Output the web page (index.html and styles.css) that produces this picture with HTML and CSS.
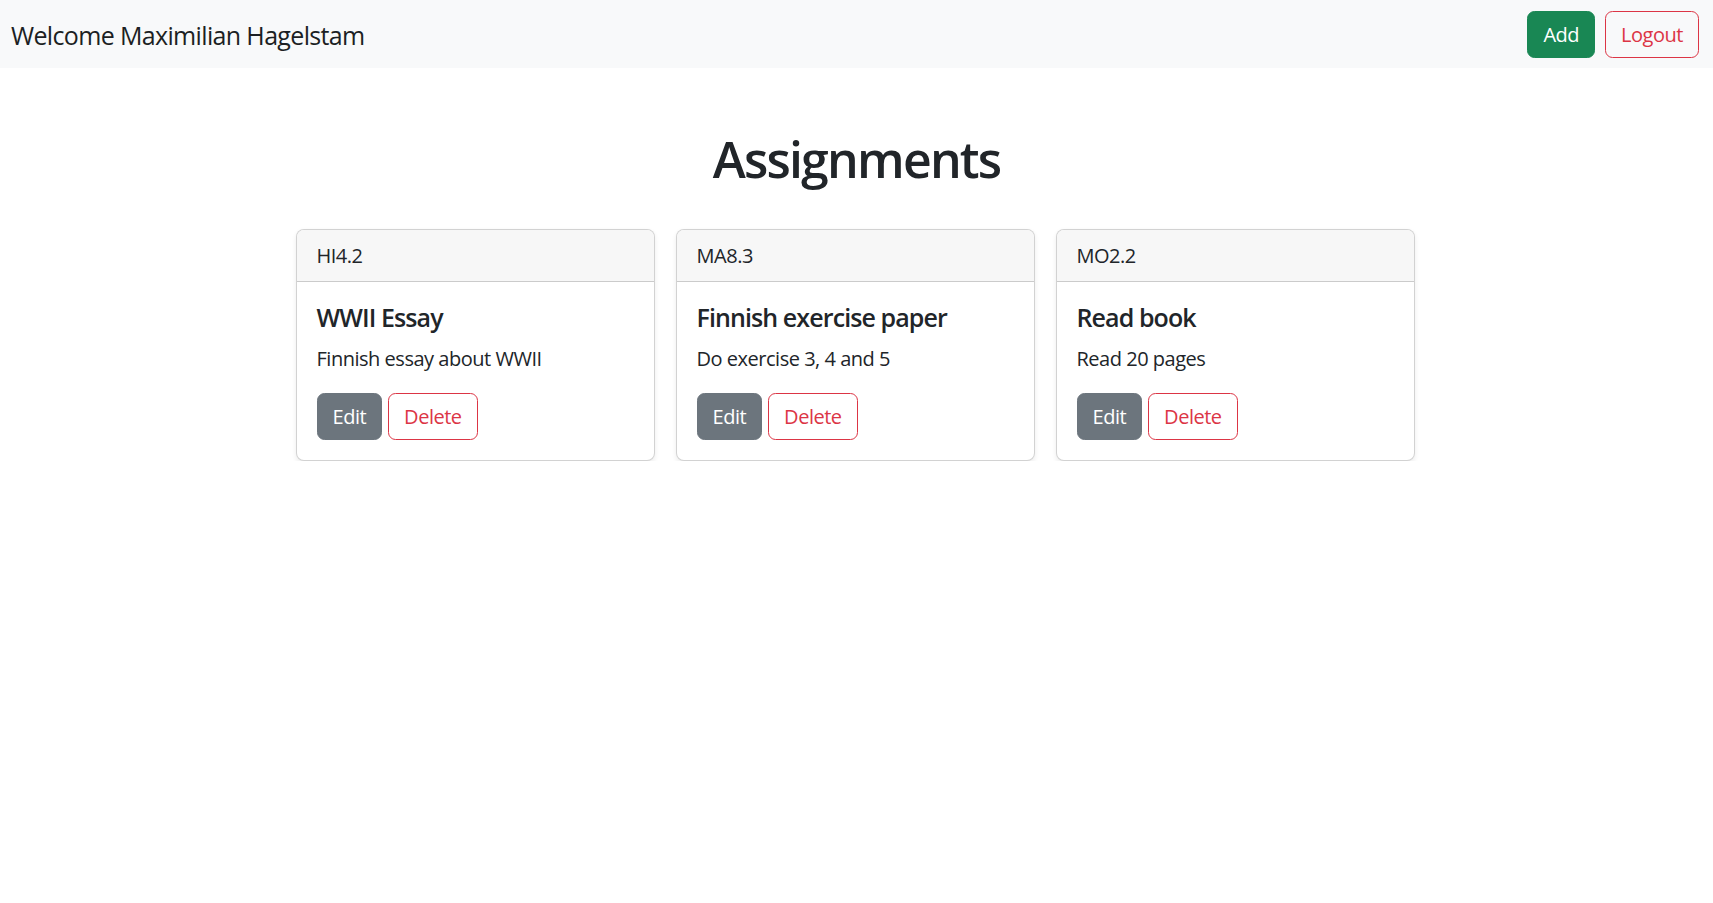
FILE: index.html
```html
<!DOCTYPE html>
<html lang="en">
<head>
<meta charset="utf-8">
<title>Assignments</title>
<link rel="stylesheet" href="styles.css">
</head>
<body>
<nav class="navbar">
  <span class="brand">Welcome Maximilian Hagelstam</span>
  <div class="nav-actions">
    <button class="btn btn-success">Add</button>
    <button class="btn btn-outline-danger">Logout</button>
  </div>
</nav>
<main class="main">
  <h1 class="page-title">Assignments</h1>
  <div class="cards">
    <div class="card">
      <div class="card-header">HI4.2</div>
      <div class="card-body">
        <h5 class="card-title">WWII Essay</h5>
        <p class="card-text">Finnish essay about WWII</p>
        <div class="card-actions">
          <button class="btn btn-secondary">Edit</button>
          <button class="btn btn-outline-danger">Delete</button>
        </div>
      </div>
    </div>
    <div class="card">
      <div class="card-header">MA8.3</div>
      <div class="card-body">
        <h5 class="card-title">Finnish exercise paper</h5>
        <p class="card-text">Do exercise 3, 4 and 5</p>
        <div class="card-actions">
          <button class="btn btn-secondary">Edit</button>
          <button class="btn btn-outline-danger">Delete</button>
        </div>
      </div>
    </div>
    <div class="card">
      <div class="card-header">MO2.2</div>
      <div class="card-body">
        <h5 class="card-title">Read book</h5>
        <p class="card-text">Read 20 pages</p>
        <div class="card-actions">
          <button class="btn btn-secondary">Edit</button>
          <button class="btn btn-outline-danger">Delete</button>
        </div>
      </div>
    </div>
  </div>
</main>
</body>
</html>
```

FILE: styles.css
```css
* { box-sizing: border-box; }
html, body {
  margin: 0;
  padding: 0;
}
body {
  font-family: "Open Sans", "Noto Sans", "Liberation Sans", sans-serif;
  font-size: 20px;
  line-height: 1.5;
  letter-spacing: -0.024em;
  color: #212529;
  background: #fff;
}
.navbar {
  height: 68px;
  background: #f8f9fa;
  display: flex;
  align-items: center;
  justify-content: space-between;
  padding: 0 14px 0 11px;
}
.brand {
  font-size: 25px;
  line-height: 37px;
  letter-spacing: -0.026em;
  color: #1c1f23;
  padding-top: 2px;
}
.nav-actions {
  display: flex;
  gap: 10px;
  padding-top: 1px;
}
.btn {
  font-family: inherit;
  font-size: 20px;
  line-height: 30px;
  letter-spacing: -0.024em;
  padding: 7.5px 15px;
  border-radius: 7.5px;
  border: 1px solid transparent;
  background: transparent;
  cursor: pointer;
  margin: 0;
}
.btn-success {
  background: #198754;
  border-color: #198754;
  color: #fff;
}
.btn-secondary {
  background: #6c757d;
  border-color: #6c757d;
  color: #fff;
}
.btn-outline-danger {
  color: #dc3545;
  border-color: #dc3545;
  background: transparent;
}
.main {
  display: flex;
  flex-direction: column;
  align-items: center;
}
.page-title {
  font-size: 50px;
  font-weight: 600;
  line-height: 60px;
  letter-spacing: -0.036em;
  margin: 61px 0 40px;
}
.cards {
  display: flex;
  gap: 21px;
  justify-content: center;
  padding-right: 3px;
}
.card {
  width: 359px;
  border: 1px solid rgba(0, 0, 0, 0.175);
  border-radius: 8px;
  box-shadow: 0 2.5px 5px rgba(0, 0, 0, 0.075);
  background: #fff;
  overflow: hidden;
}
.card-header {
  background: #f7f7f7;
  border-bottom: 1px solid rgba(0, 0, 0, 0.175);
  padding: 10px 20px;
  line-height: 31px;
}
.card-body {
  padding: 20px;
}
.card-title {
  margin: 0 0 11px;
  font-size: 25px;
  font-weight: 600;
  line-height: 30px;
  letter-spacing: -0.036em;
}
.card-text {
  margin: 0 0 19px;
  line-height: 31px;
}
.card-actions {
  display: flex;
  gap: 6px;
}
```
